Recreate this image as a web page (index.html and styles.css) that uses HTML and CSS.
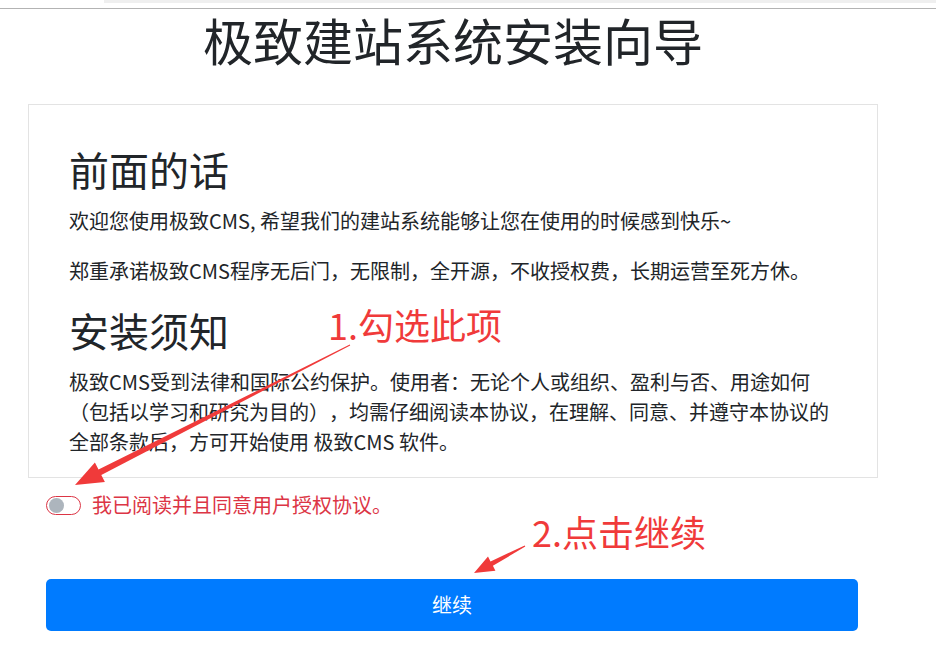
FILE: index.html
```html
<!DOCTYPE html>
<html lang="zh-CN">
<head>
<meta charset="utf-8">
<title>极致建站系统安装向导</title>
<link rel="stylesheet" href="styles.css">
</head>
<body>
<div class="chrome">
  <div class="chrome-tab"></div>
  <div class="chrome-line"></div>
</div>
<div class="page">
  <h1 class="page-title">极致建站系统安装向导</h1>
  <div class="card">
    <h2 class="section-title">前面的话</h2>
    <p class="text">欢迎您使用极致CMS, 希望我们的建站系统能够让您在使用的时候感到快乐~</p>
    <p class="text">郑重承诺极致CMS程序无后门，无限制，全开源，不收授权费，长期运营至死方休。</p>
    <h2 class="section-title">安装须知</h2>
    <p class="text">极致CMS受到法律和国际公约保护。使用者：无论个人或组织、盈利与否、用途如何<br>（包括以学习和研究为目的），均需仔细阅读本协议，在理解、同意、并遵守本协议的<br>全部条款后，方可开始使用 极致CMS 软件。</p>
  </div>
  <div class="form">
    <label class="agree">
      <span class="switch"><span class="knob"></span></span>
      <span class="agree-text">我已阅读并且同意用户授权协议。</span>
    </label>
    <button class="btn" type="button">继续</button>
  </div>
</div>
<div class="note note-1">1.勾选此项</div>
<div class="note note-2">2.点击继续</div>
<svg class="arrows" width="936" height="663" viewBox="0 0 936 663" xmlns="http://www.w3.org/2000/svg">
  <polygon fill="#f03a3a" points="349.8,344.6 98.5,469.6 94.9,462.5 75,485 104.9,482.1 101.3,475.0 350.2,345.4"/>
  <polygon fill="#f03a3a" points="524.7,545.4 490.5,561.4 488.0,556.5 474,573 495.4,570.7 492.9,565.8 525.3,546.6"/>
</svg>
</body>
</html>
```
FILE: styles.css
```css
html, body {
  margin: 0;
  padding: 0;
  background: #ffffff;
}
body {
  font-family: "Noto Sans CJK SC", "Microsoft YaHei", sans-serif;
  color: #212529;
  width: 936px;
  height: 663px;
  overflow: hidden;
  position: relative;
  text-spacing-trim: space-all;
}
.chrome {
  height: 9px;
  display: flex;
  flex-direction: column;
}
.chrome-tab {
  height: 3px;
  margin-left: 104px;
  background: #efefef;
}
.chrome-line {
  margin-top: 5px;
  height: 1px;
  background: #b3b3b3;
}
.page {
  width: 850px;
  margin-left: 28px;
}
.page-title {
  margin: 0;
  font-size: 50px;
  line-height: 60px;
  font-weight: 400;
  text-align: center;
  color: #212529;
}
.card {
  margin-top: 35px;
  border: 1px solid #e3e3e3;
  padding: 40px 40px 0 40px;
}
.section-title {
  margin: 0 0 13px 0;
  font-size: 40px;
  line-height: 48px;
  font-weight: 400;
}
.text {
  margin: 0 0 20px 0;
  font-size: 20px;
  line-height: 30px;
}
.form {
  padding: 0 20px 0 18px;
}
.agree {
  margin-top: 12px;
  height: 30px;
  display: flex;
  align-items: center;
  gap: 11px;
}
.switch {
  width: 35px;
  height: 19px;
  box-sizing: border-box;
  border: 1px solid #dc3545;
  border-radius: 10px;
  display: flex;
  align-items: center;
  padding-left: 2px;
}
.knob {
  width: 15px;
  height: 15px;
  border-radius: 50%;
  background: #adb5bd;
}
.agree-text {
  font-size: 20px;
  line-height: 30px;
  color: #dc3545;
}
.btn {
  display: block;
  margin-top: 59px;
  width: 812px;
  height: 52px;
  border: 0;
  border-radius: 5px;
  background: #007bff;
  color: #ffffff;
  font-family: "Noto Sans CJK SC", sans-serif;
  font-size: 20px;
  line-height: 30px;
  padding: 0;
}
.note {
  position: absolute;
  font-size: 36px;
  line-height: 36px;
  color: #f03a3a;
  white-space: nowrap;
}
.note-1 {
  left: 328px;
  top: 306px;
}
.note-2 {
  left: 532px;
  top: 513px;
}
.arrows {
  position: absolute;
  left: 0;
  top: 0;
  pointer-events: none;
}
```
